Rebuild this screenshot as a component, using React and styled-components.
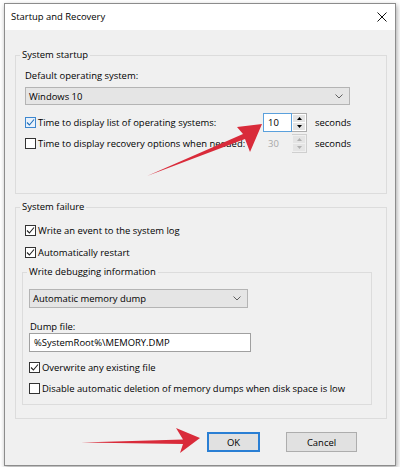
import styled, { createGlobalStyle } from 'styled-components'

const GlobalStyle = createGlobalStyle`
  html, body {
    margin: 0;
    padding: 0;
    background: #fff;
  }
  body {
    font-family: "Open Sans", "Noto Sans", sans-serif;
    font-size: 9.45px;
    color: #000;
  }
  * { box-sizing: border-box; }
`

const Chevron = () => (
  <svg width="8" height="5" viewBox="0 0 8 5">
    <polyline points="0.5,0.5 4,4 7.5,0.5" fill="none" stroke="#606060" strokeWidth="1" />
  </svg>
)

const CheckMark = ({ color }) => (
  <svg width="9" height="9" viewBox="0 0 9 9">
    <polyline points="1,4.5 3.4,7 8,1.5" fill="none" stroke={color} strokeWidth="1.1" />
  </svg>
)

const SpinArrow = ({ down, color }) => (
  <svg width="5" height="3" viewBox="0 0 5 3">
    <polygon points={down ? '0,0 5,0 2.5,3' : '0,3 5,3 2.5,0'} fill={color} />
  </svg>
)

const CheckBox = ({ checked, hot, children }) => (
  <CheckRow>
    <Box $hot={hot}>{checked && <CheckMark color={hot ? '#1f6fb8' : '#222'} />}</Box>
    <span>{children}</span>
  </CheckRow>
)

const Spin = ({ value, disabled, focused }) => (
  <SpinWrap $disabled={disabled}>
    <SpinField $disabled={disabled} $focused={focused}>{value}</SpinField>
    <SpinButtons $disabled={disabled}>
      <SpinBtn><SpinArrow color={disabled ? '#b0b0b0' : '#000'} /></SpinBtn>
      <SpinBtn><SpinArrow down color={disabled ? '#b0b0b0' : '#000'} /></SpinBtn>
    </SpinButtons>
  </SpinWrap>
)

const Arrows = () => (
  <Overlay width="400" height="467" viewBox="0 0 400 467">
    <polygon
      points="147,176 243,134 237,127 262,124 250,152 245,139"
      fill="#d92b3a"
    />
    <polygon
      points="81,442.5 183,439.5 176,428 200,438 180,453 183,444"
      fill="#d92b3a"
    />
  </Overlay>
)

const App = () => {
  return (
    <Page>
      <GlobalStyle />
      <Window>
        <TitleBar>
          <span>Startup and Recovery</span>
          <svg width="10" height="10" viewBox="0 0 10 10">
            <path d="M0.5 0.5 L9.5 9.5 M9.5 0.5 L0.5 9.5" stroke="#111" strokeWidth="1" />
          </svg>
        </TitleBar>
        <Content>
          <Group $top={18}>
            <Legend>System startup</Legend>
            <GroupBody $pad="7px 36px 40px 9px">
              <Label>Default operating system:</Label>
              <Combo $width={325} $height={18} $top={4}>
                <span>Windows 10</span>
                <Chevron />
              </Combo>
              <SpinRow $top={8}>
                <CheckBox checked hot>Time to display list of operating systems:</CheckBox>
                <Spin value="10" focused />
                <Unit>seconds</Unit>
              </SpinRow>
              <SpinRow $top={2}>
                <CheckBox>Time to display recovery options when needed:</CheckBox>
                <Spin value="30" disabled />
                <Unit>seconds</Unit>
              </SpinRow>
            </GroupBody>
          </Group>

          <Group $top={6}>
            <Legend>System failure</Legend>
            <GroupBody $pad="8px 14px 13px 6px">
              <Indent>
                <CheckBox checked>Write an event to the system log</CheckBox>
                <Spacer $h={6} />
                <CheckBox checked>Automatically restart</CheckBox>
              </Indent>
              <Group $top={5}>
                <Legend>Write debugging information</Legend>
                <GroupBody $pad="10px 6px 8px 6px">
                  <Combo $width={219} $height={19} $top={0}>
                    <span>Automatic memory dump</span>
                    <Chevron />
                  </Combo>
                  <DumpLabel>Dump file:</DumpLabel>
                  <TextInput>%SystemRoot%\MEMORY.DMP</TextInput>
                  <Spacer $h={7} />
                  <CheckBox checked>Overwrite any existing file</CheckBox>
                  <Spacer $h={5} />
                  <CheckBox>Disable automatic deletion of memory dumps when disk space is low</CheckBox>
                </GroupBody>
              </Group>
            </GroupBody>
          </Group>

          <ButtonBar>
            <Button $width={53} $default>OK</Button>
            <Button $width={71}>Cancel</Button>
          </ButtonBar>
        </Content>
      </Window>
      <Arrows />
    </Page>
  )
}

const Page = styled.div`
  position: relative;
  width: 400px;
  height: 467px;
  padding: 3px 0 0 4px;
  overflow: hidden;
`
const Window = styled.div`
  width: 392px;
  height: 463px;
  border: 1px solid #8c8c8c;
  background: #f0f0f0;
  box-shadow: 1px 2px 5px rgba(0, 0, 0, 0.35);
  display: flex;
  flex-direction: column;
`
const TitleBar = styled.div`
  height: 26px;
  flex: 0 0 26px;
  background: #fff;
  display: flex;
  align-items: center;
  justify-content: space-between;
  padding: 0 8px 0 6px;
  line-height: 14px;
`
const Content = styled.div`
  flex: 1;
  display: flex;
  flex-direction: column;
  padding: 0 8px 0 10px;
`
const Group = styled.fieldset`
  margin: ${(p) => p.$top}px 0 0;
  padding: 0;
  border: 1px solid #dcdcdc;
  min-width: 0;
`
const Legend = styled.legend`
  margin-left: 4px;
  padding: 0 2px;
  line-height: 14px;
`
const GroupBody = styled.div`
  padding: ${(p) => p.$pad};
  display: flex;
  flex-direction: column;
`
const Label = styled.div`
  line-height: 14px;
`
const DumpLabel = styled.div`
  margin-top: 12px;
  line-height: 13px;
  padding-left: 1px;
`
const Combo = styled.div`
  margin-top: ${(p) => p.$top}px;
  width: ${(p) => p.$width}px;
  height: ${(p) => p.$height}px;
  border: 1px solid #b4b4b4;
  background: #e5e5e5;
  display: flex;
  align-items: center;
  justify-content: space-between;
  padding: 0 6px 0 3px;
`
const SpinRow = styled.div`
  margin-top: ${(p) => p.$top}px;
  display: grid;
  grid-template-columns: 238px 44px auto;
  align-items: center;
  height: 19px;
`
const CheckRow = styled.div`
  display: flex;
  align-items: center;
  gap: 2px;
  height: 16px;
  white-space: nowrap;
`
const Box = styled.div`
  width: 11px;
  height: 11px;
  flex: 0 0 11px;
  border: 1px solid ${(p) => (p.$hot ? '#3d87cf' : '#333')};
  background: ${(p) => (p.$hot ? '#e8f1fb' : '#fff')};
  display: flex;
  align-items: center;
  justify-content: center;
`
const Indent = styled.div`
  padding-left: 3px;
`
const Spacer = styled.div`
  height: ${(p) => p.$h}px;
`
const SpinWrap = styled.div`
  display: flex;
  height: 19px;
  width: 44px;
  border: 1px solid ${(p) => (p.$disabled ? '#cfcfcf' : '#adadad')};
`
const SpinField = styled.div`
  flex: 0 0 29px;
  background: ${(p) => (p.$disabled ? '#f0f0f0' : '#fff')};
  color: ${(p) => (p.$disabled ? '#a8a8a8' : '#000')};
  outline: ${(p) => (p.$focused ? '1px solid #5aa0dc' : 'none')};
  outline-offset: -1px;
  margin: -1px 0 -1px -1px;
  padding-left: 5px;
  display: flex;
  align-items: center;
`
const SpinButtons = styled.div`
  flex: 1;
  display: flex;
  flex-direction: column;
  gap: 1px;
  padding: 1px;
  background: ${(p) => (p.$disabled ? '#f0f0f0' : '#fff')};
`
const SpinBtn = styled.div`
  flex: 1;
  background: #e4e4e4;
  display: flex;
  align-items: center;
  justify-content: center;
`
const Unit = styled.span`
  margin-left: 8px;
`
const TextInput = styled.div`
  width: 222px;
  height: 19px;
  border: 1px solid #a0a0a0;
  background: #fff;
  display: flex;
  align-items: center;
  padding-left: 4px;
`
const ButtonBar = styled.div`
  margin-top: 13px;
  display: flex;
  justify-content: flex-end;
  gap: 26px;
  padding-right: 30px;
`
const Button = styled.div`
  width: ${(p) => p.$width}px;
  height: 20px;
  background: #e1e1e1;
  border: 1px solid ${(p) => (p.$default ? '#2a7fd4' : '#adadad')};
  box-shadow: ${(p) => (p.$default ? 'inset 0 0 0 1px #2a7fd4' : 'none')};
  display: flex;
  align-items: center;
  justify-content: center;
`
const Overlay = styled.svg`
  position: absolute;
  top: 0;
  left: 0;
  pointer-events: none;
`

export default App
